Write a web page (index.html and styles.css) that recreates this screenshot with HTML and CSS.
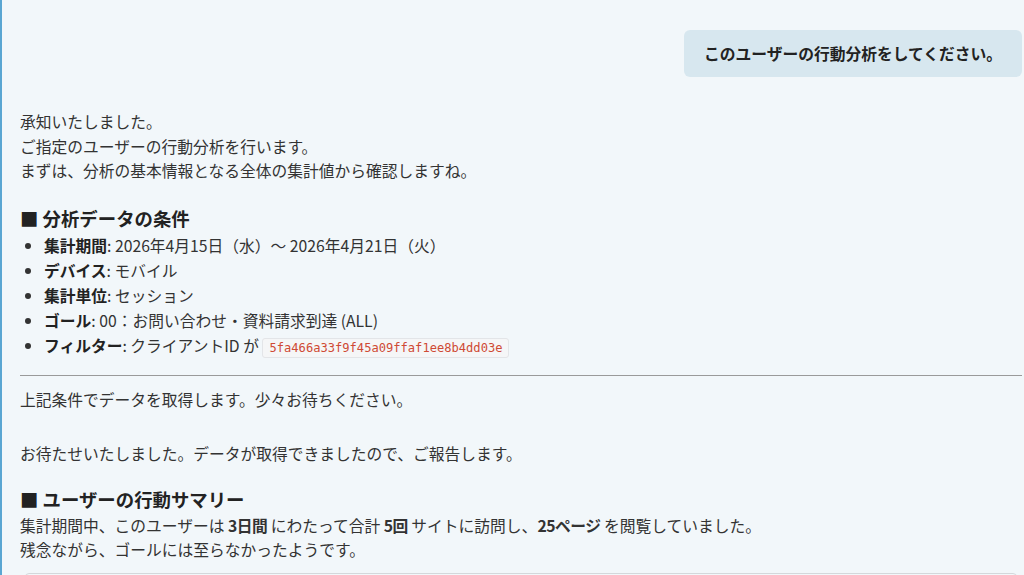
FILE: index.html
```html
<!DOCTYPE html>
<html lang="ja">
<head>
<meta charset="utf-8">
<link rel="stylesheet" href="styles.css">
</head>
<body>
<div class="chat">
  <div class="user-row">
    <div class="bubble">このユーザーの行動分析をしてください。</div>
  </div>
  <div class="reply">
    <p class="intro">承知いたしました。<br>ご指定のユーザーの行動分析を行います。<br>まずは、分析の基本情報となる全体の集計値から確認しますね。</p>
    <h3 class="h">■ 分析データの条件</h3>
    <ul class="cond">
      <li><b>集計期間</b>: 2026年4月15日（水）～ 2026年4月21日（火）</li>
      <li><b>デバイス</b>: モバイル</li>
      <li><b>集計単位</b>: セッション</li>
      <li><b>ゴール</b>: 00：お問い合わせ・資料請求到達 (ALL)</li>
      <li><b>フィルター</b>: クライアントID が <code class="code">5fa466a33f9f45a09ffaf1ee8b4dd03e</code></li>
    </ul>
    <hr class="rule">
    <p class="p1">上記条件でデータを取得します。少々お待ちください。</p>
    <p class="p2">お待たせいたしました。データが取得できましたので、ご報告します。</p>
    <h3 class="h h2">■ ユーザーの行動サマリー</h3>
    <p class="p3">集計期間中、このユーザーは <b class="tight">3日間</b> にわたって合計 <b class="tight">5回</b> サイトに訪問し、<b class="tight">25ページ</b> を閲覧していました。<br>残念ながら、ゴールには至らなかったようです。</p>
    <div class="table-box"></div>
  </div>
</div>
</body>
</html>
```

FILE: styles.css
```css
html, body {
  margin: 0;
  padding: 0;
  background: #f2f7fa;
  overflow: hidden;
}
body {
  font-family: "Noto Sans CJK JP", "Noto Sans", sans-serif;
  color: #333;
  font-size: 15.75px;
  line-height: 24.5px;
}
.chat {
  border-left: 2px solid #5aa6d2;
  padding: 30px 2px 0 18px;
  height: 575px;
  box-sizing: border-box;
  overflow: hidden;
}
.user-row {
  display: flex;
  justify-content: flex-end;
}
.bubble {
  background: #d7e7ef;
  border-radius: 6px;
  padding: 12px 20px;
  font-size: 15.75px;
  font-weight: bold;
  line-height: 23px;
  color: #222;
}
.reply p { margin: 0; }
.intro { margin-top: 33px !important; }
.h {
  font-size: 18.4px;
  font-weight: bold;
  line-height: 27px;
  margin: 21px 0 0 0;
  color: #222;
}
.cond {
  margin: 1px 0 0 0;
  padding-left: 24px;
}
.cond li {
  line-height: 25px;
}
.cond b { color: #222; }
.code {
  font-family: "DejaVu Sans Mono", "Liberation Mono", monospace;
  font-size: 12.1px;
  color: #cf4a34;
  background: #f5f6f7;
  border: 1px solid #e3e5e8;
  border-radius: 3px;
  padding: 2px 6px;
}
.rule {
  border: 0;
  border-top: 1px solid #9a9a9a;
  margin: 14px 0 0 0;
}
.p1 { margin-top: 12px !important; }
.p2 { margin-top: 30px !important; }
.h2 { margin-top: 19px; }
.p3 { margin-top: 1px !important; }
.tight { letter-spacing: -0.5px; }
.table-box {
  margin: 10px 5px 0 5px;
  height: 40px;
  border: 1px solid #d4d8db;
  border-radius: 4px;
  background: #f2f7fa;
}
```
